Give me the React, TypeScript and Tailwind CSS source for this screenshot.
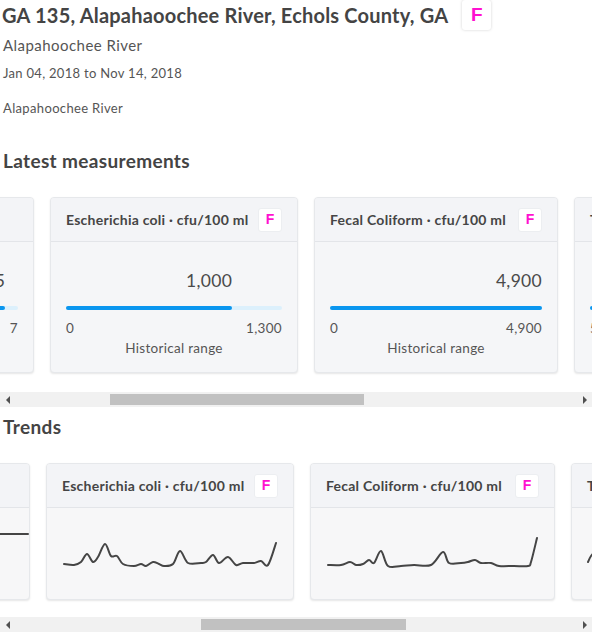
import { useEffect, useRef } from 'react';

type Measure = { name: string; value: string; min: string; max: string; pct: number; flag: boolean; w: number };

const measurements: Measure[] = [
  { name: 'pH · standard units', value: '6.5', min: '5', max: '7', pct: 94, flag: false, w: 247 },
  { name: 'Escherichia coli · cfu/100 ml', value: '1,000', min: '0', max: '1,300', pct: 76.9, flag: true, w: 248 },
  { name: 'Fecal Coliform · cfu/100 ml', value: '4,900', min: '0', max: '4,900', pct: 100, flag: true, w: 244 },
  { name: 'Temperature · °C', value: '22', min: '5.6', max: '28', pct: 70, flag: false, w: 247 },
  { name: 'Turbidity · NTU', value: '12', min: '3.1', max: '40', pct: 30, flag: false, w: 247 },
];

const trends: { name: string; flag: boolean; w: number; pts: number[][] }[] = [
  { name: 'Dissolved Oxygen · mg/L', flag: false, w: 247, pts: [[17, 40], [80, 44], [150, 38], [229, 42]] },
  { name: 'pH · standard units', flag: false, w: 247, pts: [[17, 26], [244, 26]] },
  {
    name: 'Escherichia coli · cfu/100 ml',
    flag: true,
    w: 248,
    pts: [[17, 56], [27, 57], [34, 54], [40, 46], [46, 54], [51, 49], [58, 36], [64, 48], [70, 48], [76, 56], [87, 58], [94, 56], [99, 58], [106, 54], [112, 56], [117, 58], [126, 56], [133, 43], [141, 55], [154, 55], [159, 54], [166, 47], [172, 55], [181, 49], [189, 57], [196, 55], [207, 55], [214, 53], [221, 57], [229, 35]],
  },
  {
    name: 'Fecal Coliform · cfu/100 ml',
    flag: true,
    w: 245,
    pts: [[17, 57], [30, 57], [39, 54], [45, 57], [52, 56], [58, 52], [63, 55], [70, 43], [77, 58], [90, 58], [103, 57], [120, 57], [132, 44], [138, 55], [150, 55], [157, 54], [164, 52], [170, 55], [180, 55], [188, 58], [203, 58], [217, 58], [220, 54], [226, 30]],
  },
  { name: 'Temperature · °C', flag: false, w: 247, pts: [[16, 54], [19, 48], [24, 44], [34, 46], [60, 30], [100, 24], [140, 30], [180, 40], [229, 50]] },
  { name: 'Turbidity · NTU', flag: false, w: 247, pts: [[17, 50], [60, 48], [120, 52], [229, 46]] },
];

function smooth(pts: number[][]) {
  let d = `M${pts[0][0]},${pts[0][1]}`;
  for (let i = 0; i < pts.length - 1; i++) {
    const p0 = pts[i - 1] || pts[i];
    const p1 = pts[i];
    const p2 = pts[i + 1];
    const p3 = pts[i + 2] || p2;
    const c1x = p1[0] + (p2[0] - p0[0]) / 6;
    const c1y = p1[1] + (p2[1] - p0[1]) / 6;
    const c2x = p2[0] - (p3[0] - p1[0]) / 6;
    const c2y = p2[1] - (p3[1] - p1[1]) / 6;
    d += ` C${c1x},${c1y} ${c2x},${c2y} ${p2[0]},${p2[1]}`;
  }
  return d;
}

function Flag({ big }: { big?: boolean }) {
  return (
    <span
      className={
        big
          ? "flex h-[30px] w-[29px] items-center justify-center rounded-[3px] bg-white font-['Liberation_Sans',sans-serif] text-[19px] font-bold text-[#ff10d0] shadow-[0_0_3px_rgba(0,0,0,0.18)]"
          : "flex h-[24px] w-[24px] shrink-0 items-center justify-center rounded-[3px] border border-[#eceef1] bg-white font-['Liberation_Sans',sans-serif] text-[14px] font-bold text-[#ff10d0]"
      }
    >
      F
    </span>
  );
}

function CardHead({ name, flag }: { name: string; flag: boolean }) {
  return (
    <div className="flex h-[44px] items-center justify-between border-b border-[#e3e5e9] bg-[#f3f4f7] px-[15px]">
      <span className="whitespace-nowrap text-[14px] font-bold tracking-[0.25px] text-[#454545]">{name}</span>
      {flag && <Flag />}
    </div>
  );
}

function Scrollbar({ left, width }: { left: number; width: number }) {
  return (
    <div className="flex h-[15px] items-center bg-[#f1f1f1]">
      <div className="flex w-[15px] justify-center">
        <span className="h-0 w-0 border-y-[4px] border-r-[4px] border-y-transparent border-r-[#505050]" />
      </div>
      <div className="h-[11px] flex-1">
        <div className="h-[11px] bg-[#c1c1c1]" style={{ marginLeft: left, width }} />
      </div>
      <div className="flex w-[15px] justify-center">
        <span className="h-0 w-0 border-y-[4px] border-l-[4px] border-y-transparent border-l-[#505050]" />
      </div>
    </div>
  );
}

export default function App() {
  const row1 = useRef<HTMLDivElement>(null);
  const row2 = useRef<HTMLDivElement>(null);

  useEffect(() => {
    if (row1.current) row1.current.scrollLeft = 213;
    if (row2.current) row2.current.scrollLeft = 537;
  }, []);

  return (
    <div className="w-[592px] bg-white font-[Lato,sans-serif] text-[#4a4a4a]">
      <div className="flex h-[30px] items-center gap-[14px] pl-[2px]">
        <h1 className="text-[20px] font-bold leading-[30px] tracking-[0.2px] text-[#444]">GA 135, Alapahaoochee River, Echols County, GA</h1>
        <Flag big />
      </div>
      <div className="mt-[5px] pl-[3px] text-[15px] leading-[20px] tracking-[0.45px] text-[#555]">Alapahoochee River</div>
      <div className="mt-[9px] pl-[3px] text-[13px] leading-[18px] tracking-[0.3px] text-[#555]">Jan 04, 2018 to Nov 14, 2018</div>
      <div className="mt-[17px] pl-[3px] text-[13px] leading-[18px] tracking-[0.35px] text-[#555]">Alapahoochee River</div>

      <h2 className="mt-[31px] pl-[3px] text-[19px] font-bold leading-[26px] tracking-[0.35px] text-[#444]">Latest measurements</h2>
      <div ref={row1} className="overflow-x-scroll pt-[23px] pb-[19px] [scrollbar-width:none]">
        <div className="flex w-max gap-[16px]">
          {measurements.map((m) => (
            <div key={m.name} className="shrink-0 overflow-hidden rounded-[4px] border border-[#e6e8eb] bg-[#f5f6f8] shadow-[0_1px_2px_rgba(0,0,0,0.1)]" style={{ width: m.w }}>
              <CardHead name={m.name} flag={m.flag} />
              <div className="h-[130px] px-[15px] pt-[27px]">
                <div className="text-right text-[17.5px] leading-[24px] tracking-[0.3px] text-[#4a4a4a]" style={{ width: `${m.pct}%` }}>
                  {m.value}
                </div>
                <div className="mt-[13px] h-[4px] rounded-full bg-[#dcf0fc]">
                  <div className="h-[4px] rounded-full bg-[#0a96ef]" style={{ width: `${m.pct}%` }} />
                </div>
                <div className="mt-[9px] flex justify-between text-[13.5px] leading-[18px] tracking-[0.3px] text-[#555]">
                  <span>{m.min}</span>
                  <span>{m.max}</span>
                </div>
                <div className="mt-[2px] text-center text-[13.5px] leading-[18px] tracking-[0.3px] text-[#555]">Historical range</div>
              </div>
            </div>
          ))}
        </div>
      </div>
      <Scrollbar left={95} width={254} />

      <h2 className="mt-[7px] pl-[3px] text-[19px] font-bold leading-[26px] tracking-[0.35px] text-[#444]">Trends</h2>
      <div ref={row2} className="overflow-x-scroll pt-[23px] pb-[17px] [scrollbar-width:none]">
        <div className="flex w-max gap-[16px] pl-[57px]">
          {trends.map((t) => (
            <div key={t.name} className="shrink-0 overflow-hidden rounded-[4px] border border-[#e6e8eb] bg-[#f7f7f8] shadow-[0_1px_2px_rgba(0,0,0,0.1)]" style={{ width: t.w }}>
              <CardHead name={t.name} flag={t.flag} />
              <svg width={t.w} height="91" viewBox={`0 0 ${t.w} 91`} className="block">
                <path d={smooth(t.pts)} fill="none" stroke="#454545" strokeWidth="2" strokeLinejoin="round" strokeLinecap="round" />
              </svg>
            </div>
          ))}
        </div>
      </div>
      <Scrollbar left={186} width={205} />
    </div>
  );
}
